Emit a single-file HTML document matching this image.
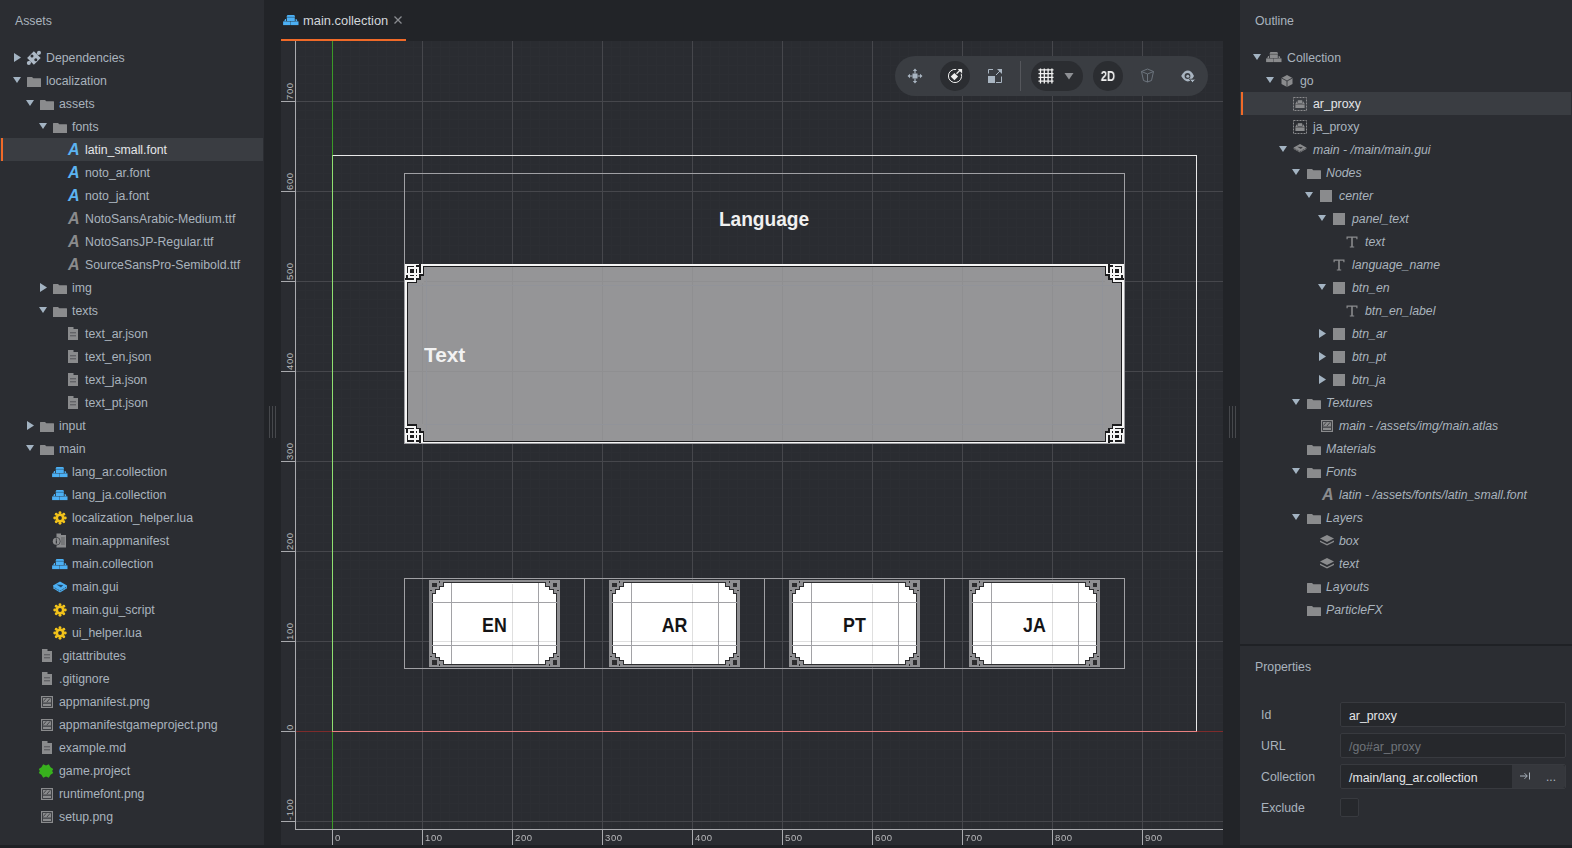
<!DOCTYPE html><html><head><meta charset="utf-8"><style>
html,body{margin:0;padding:0;}
body{width:1572px;height:848px;position:relative;overflow:hidden;background:#1f2125;font-family:'Liberation Sans', sans-serif;}
.a{position:absolute;}

</style></head><body>

<svg width="0" height="0" style="position:absolute">
<defs>
<symbol id="tdown" viewBox="0 0 8 6"><path d="M0 0H8L4 6Z" fill="#a3b3c2"/></symbol>
<symbol id="tright" viewBox="0 0 7 9"><path d="M0 0L7 4.5L0 9Z" fill="#a3b3c2"/></symbol>
<symbol id="folder" viewBox="0 0 14 10"><path d="M0 0.5Q0 0 0.5 0H5L6.3 1.3H13.5Q14 1.3 14 1.8V10H0Z" fill="#8a8b8d"/></symbol>
<symbol id="puzzle" viewBox="0 0 18 18"><g fill="#adb9c6"><path d="M8.9 2.2L15.7 9 8.9 15.8 2.1 9Z"/><circle cx="14" cy="3.8" r="2"/><circle cx="3.8" cy="14" r="2"/><path d="M11.5 4.6L13 3.2 14.6 4.8 13.2 6.3Z"/><path d="M4.6 11.5L3.2 13 4.8 14.6 6.3 13.2Z"/></g><circle cx="7" cy="7" r="1.5" fill="#2b2d32"/><circle cx="10.8" cy="10.8" r="1.5" fill="#2b2d32"/></symbol>
<symbol id="coll" viewBox="0 0 16 11"><g fill="currentColor"><path d="M3.8 1.2Q3.8 0 5 0H10.6Q11.8 0 11.8 1.2V6.1H3.8Z"/><path d="M1.2 6.3L2.1 4H3V6.3Z"/><path d="M14.4 6.3L13.5 4H12.6V6.3Z"/><rect x="0.1" y="6.4" width="7.4" height="3.7"/><rect x="8" y="6.4" width="7.5" height="3.7"/></g><rect x="3.8" y="1.7" width="8" height="1.3" fill="#000" opacity=".25"/><rect x="7.5" y="6.4" width="0.5" height="3.7" fill="currentColor" opacity=".6"/></symbol>
<symbol id="gear" viewBox="0 0 14 14"><g fill="#f1c21b"><circle cx="7" cy="7" r="4.6"/><circle cx="12.30" cy="7.00" r="1.45"/><circle cx="10.75" cy="10.75" r="1.45"/><circle cx="7.00" cy="12.30" r="1.45"/><circle cx="3.25" cy="10.75" r="1.45"/><circle cx="1.70" cy="7.00" r="1.45"/><circle cx="3.25" cy="3.25" r="1.45"/><circle cx="7.00" cy="1.70" r="1.45"/><circle cx="10.75" cy="3.25" r="1.45"/></g><circle cx="7" cy="7" r="1.9" fill="#2b2d32"/></symbol>
<symbol id="manifest" viewBox="0 0 15 15"><path d="M4.5 0.5H9V2H14V14.5H4.5Z" fill="#8a8b8d"/><path d="M9 5H12.8M9 7H12.8M9 9H12.8M9 11H12.8" stroke="#5a5b5f" stroke-width=".9"/><circle cx="4.3" cy="8.3" r="4.1" fill="#2b2d32"/><circle cx="4.3" cy="8.3" r="3.5" fill="#8a8b8d"/><rect x="3.8" y="7.3" width="1.1" height="3.2" fill="#2b2d32"/><rect x="3.8" y="5.6" width="1.1" height="1.1" fill="#2b2d32"/></symbol>
<symbol id="gui" viewBox="0 0 16 12"><path d="M8 0.5L15 4.5V7.2L8 11.5L1 7.2V4.5Z" fill="#4cb0f4"/><path d="M1 5.8L8 10L15 5.8" stroke="#2b2d32" stroke-width=".7" fill="none" stroke-dasharray="1.2 .8"/><path d="M4.5 3.6L11.2 3.9 9 6.4Z" fill="#24486a"/></symbol>
<symbol id="doc" viewBox="0 0 10 13"><path d="M0 0H5.5V2H10V13H0Z" fill="#8a8b8d"/><rect x="2" y="5" width="6" height="1.4" fill="#626367"/><rect x="2" y="8" width="6" height="1.4" fill="#626367"/></symbol>
<symbol id="img" viewBox="0 0 12 12"><rect x=".6" y=".6" width="10.8" height="10.8" fill="none" stroke="#8a8b8d" stroke-width="1.2"/><rect x="2" y="2" width="8" height="4.6" fill="#8a8b8d"/><path d="M2.3 5.6L5.2 2.3M5.8 6.2L9.2 2.3" stroke="#3a3b3e" stroke-width=".9"/><rect x="2" y="7.6" width="8" height="2.4" fill="#8a8b8d"/></symbol>
<symbol id="gproj" viewBox="0 0 16 16"><path d="M5.2 1.2L8 2.6 10.8 1.2 12.6 4.2 15.2 6 14.2 8 15.2 10 12.6 11.8 10.8 14.8 8 13.4 5.2 14.8 3.4 11.8 0.8 10 1.8 8 0.8 6 3.4 4.2Z" fill="#38b11d"/></symbol>
<symbol id="cube" viewBox="0 0 12 12"><path d="M6 0L11.5 3V9L6 12 .5 9V3Z" fill="#8a8b8d"/><path d="M.5 3L6 6 11.5 3M6 6V12" stroke="#2b2d32" stroke-width=".8" fill="none"/></symbol>
<symbol id="proxy" viewBox="0 0 14 14"><rect x=".5" y=".5" width="13" height="13" fill="none" stroke="#8a8b8d" stroke-width="1" stroke-dasharray="2 1"/><path d="M4.8 3.2H9.2V6H4.8Z" fill="#8a8b8d"/><path d="M3.6 4.6H4.4V6.6H9.6V4.6H10.4L11.6 6.8V11H2.4V6.8Z" fill="#8a8b8d"/><rect x="2.4" y="7.2" width="9.2" height=".8" fill="#000" opacity=".3"/></symbol>
<symbol id="box" viewBox="0 0 12 12"><rect width="12" height="12" fill="#8a8b8d"/></symbol>
<symbol id="ticon" viewBox="0 0 12 12"><path d="M0.5 0.5H11.5V3.2H10.3V1.8H6.8V10.5H8.2V11.5H3.8V10.5H5.2V1.8H1.7V3.2H0.5Z" fill="#8a8b8d"/></symbol>
<symbol id="layers" viewBox="0 0 14 11"><path d="M7 0L14 3.5 7 7 0 3.5Z" fill="#8a8b8d"/><path d="M0 5.5L7 9 14 5.5V7L7 10.5 0 7Z" fill="#8a8b8d"/></symbol>
<symbol id="layersg" viewBox="0 0 14 11"><path d="M7 0L14 3.8V5.6L7 9.4 0 5.6V3.8Z" fill="#8a8b8d"/><path d="M0 4.6L7 8.4 14 4.6" stroke="#2b2d32" stroke-width=".8" fill="none" stroke-dasharray="1.2 .8"/><path d="M4 3L10 3.3 8 5.4Z" fill="#3c3d40"/></symbol>
</defs></svg>

<div class="a" style="left:0;top:0;width:264px;height:845px;background:#2b2d32;overflow:hidden;">
<div class="a" style="left:15px;top:12px;font:12.3px/18px 'Liberation Sans', sans-serif;color:#a9b3bd;">Assets</div>
<svg style="position:absolute;left:14px;top:53px;width:7px;height:9px;"><use href="#tright"/></svg>
<svg style="position:absolute;left:25px;top:49px;width:18px;height:18px;"><use href="#puzzle"/></svg>
<div style="position:absolute;left:46px;top:47px;height:23px;font:12.3px/23px 'Liberation Sans', sans-serif;color:#a9b3bd;white-space:nowrap;">Dependencies</div>
<svg style="position:absolute;left:13px;top:77px;width:8px;height:6px;"><use href="#tdown"/></svg>
<svg style="position:absolute;left:27px;top:77px;width:14px;height:10px;"><use href="#folder"/></svg>
<div style="position:absolute;left:46px;top:70px;height:23px;font:12.3px/23px 'Liberation Sans', sans-serif;color:#a9b3bd;white-space:nowrap;">localization</div>
<svg style="position:absolute;left:26px;top:100px;width:8px;height:6px;"><use href="#tdown"/></svg>
<svg style="position:absolute;left:40px;top:100px;width:14px;height:10px;"><use href="#folder"/></svg>
<div style="position:absolute;left:59px;top:93px;height:23px;font:12.3px/23px 'Liberation Sans', sans-serif;color:#a9b3bd;white-space:nowrap;">assets</div>
<svg style="position:absolute;left:39px;top:123px;width:8px;height:6px;"><use href="#tdown"/></svg>
<svg style="position:absolute;left:53px;top:123px;width:14px;height:10px;"><use href="#folder"/></svg>
<div style="position:absolute;left:72px;top:116px;height:23px;font:12.3px/23px 'Liberation Sans', sans-serif;color:#a9b3bd;white-space:nowrap;">fonts</div>
<div style="position:absolute;left:0;top:138px;right:1px;height:23px;background:#3a3d42;"></div>
<div style="position:absolute;left:1px;top:138px;width:2px;height:23px;background:#f06a28;"></div>
<div style="position:absolute;left:68px;top:142px;font:italic bold 16px/16px 'Liberation Sans', sans-serif;color:#5cb4f2;">A</div>
<div style="position:absolute;left:85px;top:139px;height:23px;font:12.3px/23px 'Liberation Sans', sans-serif;color:#e4e6e8;white-space:nowrap;">latin_small.font</div>
<div style="position:absolute;left:68px;top:165px;font:italic bold 16px/16px 'Liberation Sans', sans-serif;color:#5cb4f2;">A</div>
<div style="position:absolute;left:85px;top:162px;height:23px;font:12.3px/23px 'Liberation Sans', sans-serif;color:#a9b3bd;white-space:nowrap;">noto_ar.font</div>
<div style="position:absolute;left:68px;top:188px;font:italic bold 16px/16px 'Liberation Sans', sans-serif;color:#5cb4f2;">A</div>
<div style="position:absolute;left:85px;top:185px;height:23px;font:12.3px/23px 'Liberation Sans', sans-serif;color:#a9b3bd;white-space:nowrap;">noto_ja.font</div>
<div style="position:absolute;left:68px;top:211px;font:italic bold 16px/16px 'Liberation Sans', sans-serif;color:#8a8b8d;">A</div>
<div style="position:absolute;left:85px;top:208px;height:23px;font:12.3px/23px 'Liberation Sans', sans-serif;color:#a9b3bd;white-space:nowrap;">NotoSansArabic-Medium.ttf</div>
<div style="position:absolute;left:68px;top:234px;font:italic bold 16px/16px 'Liberation Sans', sans-serif;color:#8a8b8d;">A</div>
<div style="position:absolute;left:85px;top:231px;height:23px;font:12.3px/23px 'Liberation Sans', sans-serif;color:#a9b3bd;white-space:nowrap;">NotoSansJP-Regular.ttf</div>
<div style="position:absolute;left:68px;top:257px;font:italic bold 16px/16px 'Liberation Sans', sans-serif;color:#8a8b8d;">A</div>
<div style="position:absolute;left:85px;top:254px;height:23px;font:12.3px/23px 'Liberation Sans', sans-serif;color:#a9b3bd;white-space:nowrap;">SourceSansPro-Semibold.ttf</div>
<svg style="position:absolute;left:40px;top:283px;width:7px;height:9px;"><use href="#tright"/></svg>
<svg style="position:absolute;left:53px;top:284px;width:14px;height:10px;"><use href="#folder"/></svg>
<div style="position:absolute;left:72px;top:277px;height:23px;font:12.3px/23px 'Liberation Sans', sans-serif;color:#a9b3bd;white-space:nowrap;">img</div>
<svg style="position:absolute;left:39px;top:307px;width:8px;height:6px;"><use href="#tdown"/></svg>
<svg style="position:absolute;left:53px;top:307px;width:14px;height:10px;"><use href="#folder"/></svg>
<div style="position:absolute;left:72px;top:300px;height:23px;font:12.3px/23px 'Liberation Sans', sans-serif;color:#a9b3bd;white-space:nowrap;">texts</div>
<svg style="position:absolute;left:68px;top:327px;width:10px;height:13px;"><use href="#doc"/></svg>
<div style="position:absolute;left:85px;top:323px;height:23px;font:12.3px/23px 'Liberation Sans', sans-serif;color:#a9b3bd;white-space:nowrap;">text_ar.json</div>
<svg style="position:absolute;left:68px;top:350px;width:10px;height:13px;"><use href="#doc"/></svg>
<div style="position:absolute;left:85px;top:346px;height:23px;font:12.3px/23px 'Liberation Sans', sans-serif;color:#a9b3bd;white-space:nowrap;">text_en.json</div>
<svg style="position:absolute;left:68px;top:373px;width:10px;height:13px;"><use href="#doc"/></svg>
<div style="position:absolute;left:85px;top:369px;height:23px;font:12.3px/23px 'Liberation Sans', sans-serif;color:#a9b3bd;white-space:nowrap;">text_ja.json</div>
<svg style="position:absolute;left:68px;top:396px;width:10px;height:13px;"><use href="#doc"/></svg>
<div style="position:absolute;left:85px;top:392px;height:23px;font:12.3px/23px 'Liberation Sans', sans-serif;color:#a9b3bd;white-space:nowrap;">text_pt.json</div>
<svg style="position:absolute;left:27px;top:421px;width:7px;height:9px;"><use href="#tright"/></svg>
<svg style="position:absolute;left:40px;top:422px;width:14px;height:10px;"><use href="#folder"/></svg>
<div style="position:absolute;left:59px;top:415px;height:23px;font:12.3px/23px 'Liberation Sans', sans-serif;color:#a9b3bd;white-space:nowrap;">input</div>
<svg style="position:absolute;left:26px;top:445px;width:8px;height:6px;"><use href="#tdown"/></svg>
<svg style="position:absolute;left:40px;top:445px;width:14px;height:10px;"><use href="#folder"/></svg>
<div style="position:absolute;left:59px;top:438px;height:23px;font:12.3px/23px 'Liberation Sans', sans-serif;color:#a9b3bd;white-space:nowrap;">main</div>
<svg style="position:absolute;left:52px;top:467px;width:16px;height:11px;color:#4cb0f4;"><use href="#coll"/></svg>
<div style="position:absolute;left:72px;top:461px;height:23px;font:12.3px/23px 'Liberation Sans', sans-serif;color:#a9b3bd;white-space:nowrap;">lang_ar.collection</div>
<svg style="position:absolute;left:52px;top:490px;width:16px;height:11px;color:#4cb0f4;"><use href="#coll"/></svg>
<div style="position:absolute;left:72px;top:484px;height:23px;font:12.3px/23px 'Liberation Sans', sans-serif;color:#a9b3bd;white-space:nowrap;">lang_ja.collection</div>
<svg style="position:absolute;left:53px;top:511px;width:14px;height:14px;"><use href="#gear"/></svg>
<div style="position:absolute;left:72px;top:507px;height:23px;font:12.3px/23px 'Liberation Sans', sans-serif;color:#a9b3bd;white-space:nowrap;">localization_helper.lua</div>
<svg style="position:absolute;left:52px;top:533px;width:15px;height:15px;"><use href="#manifest"/></svg>
<div style="position:absolute;left:72px;top:530px;height:23px;font:12.3px/23px 'Liberation Sans', sans-serif;color:#a9b3bd;white-space:nowrap;">main.appmanifest</div>
<svg style="position:absolute;left:52px;top:559px;width:16px;height:11px;color:#4cb0f4;"><use href="#coll"/></svg>
<div style="position:absolute;left:72px;top:553px;height:23px;font:12.3px/23px 'Liberation Sans', sans-serif;color:#a9b3bd;white-space:nowrap;">main.collection</div>
<svg style="position:absolute;left:52px;top:581px;width:16px;height:12px;"><use href="#gui"/></svg>
<div style="position:absolute;left:72px;top:576px;height:23px;font:12.3px/23px 'Liberation Sans', sans-serif;color:#a9b3bd;white-space:nowrap;">main.gui</div>
<svg style="position:absolute;left:53px;top:603px;width:14px;height:14px;"><use href="#gear"/></svg>
<div style="position:absolute;left:72px;top:599px;height:23px;font:12.3px/23px 'Liberation Sans', sans-serif;color:#a9b3bd;white-space:nowrap;">main.gui_script</div>
<svg style="position:absolute;left:53px;top:626px;width:14px;height:14px;"><use href="#gear"/></svg>
<div style="position:absolute;left:72px;top:622px;height:23px;font:12.3px/23px 'Liberation Sans', sans-serif;color:#a9b3bd;white-space:nowrap;">ui_helper.lua</div>
<svg style="position:absolute;left:42px;top:649px;width:10px;height:13px;"><use href="#doc"/></svg>
<div style="position:absolute;left:59px;top:645px;height:23px;font:12.3px/23px 'Liberation Sans', sans-serif;color:#a9b3bd;white-space:nowrap;">.gitattributes</div>
<svg style="position:absolute;left:42px;top:672px;width:10px;height:13px;"><use href="#doc"/></svg>
<div style="position:absolute;left:59px;top:668px;height:23px;font:12.3px/23px 'Liberation Sans', sans-serif;color:#a9b3bd;white-space:nowrap;">.gitignore</div>
<svg style="position:absolute;left:41px;top:696px;width:12px;height:12px;"><use href="#img"/></svg>
<div style="position:absolute;left:59px;top:691px;height:23px;font:12.3px/23px 'Liberation Sans', sans-serif;color:#a9b3bd;white-space:nowrap;">appmanifest.png</div>
<svg style="position:absolute;left:41px;top:719px;width:12px;height:12px;"><use href="#img"/></svg>
<div style="position:absolute;left:59px;top:714px;height:23px;font:12.3px/23px 'Liberation Sans', sans-serif;color:#a9b3bd;white-space:nowrap;">appmanifestgameproject.png</div>
<svg style="position:absolute;left:42px;top:741px;width:10px;height:13px;"><use href="#doc"/></svg>
<div style="position:absolute;left:59px;top:737px;height:23px;font:12.3px/23px 'Liberation Sans', sans-serif;color:#a9b3bd;white-space:nowrap;">example.md</div>
<svg style="position:absolute;left:38px;top:763px;width:16px;height:16px;"><use href="#gproj"/></svg>
<div style="position:absolute;left:59px;top:760px;height:23px;font:12.3px/23px 'Liberation Sans', sans-serif;color:#a9b3bd;white-space:nowrap;">game.project</div>
<svg style="position:absolute;left:41px;top:788px;width:12px;height:12px;"><use href="#img"/></svg>
<div style="position:absolute;left:59px;top:783px;height:23px;font:12.3px/23px 'Liberation Sans', sans-serif;color:#a9b3bd;white-space:nowrap;">runtimefont.png</div>
<svg style="position:absolute;left:41px;top:811px;width:12px;height:12px;"><use href="#img"/></svg>
<div style="position:absolute;left:59px;top:806px;height:23px;font:12.3px/23px 'Liberation Sans', sans-serif;color:#a9b3bd;white-space:nowrap;">setup.png</div>
</div>
<div class="a" style="left:264px;top:0;width:976px;height:845px;background:#222428;"></div>
<div class="a" style="left:269px;top:406px;width:1px;height:32px;background:#46484c;"></div>
<div class="a" style="left:272px;top:406px;width:1px;height:32px;background:#46484c;"></div>
<div class="a" style="left:275px;top:406px;width:1px;height:32px;background:#46484c;"></div>
<div class="a" style="left:1229px;top:406px;width:1px;height:32px;background:#46484c;"></div>
<div class="a" style="left:1232px;top:406px;width:1px;height:32px;background:#46484c;"></div>
<div class="a" style="left:1235px;top:406px;width:1px;height:32px;background:#46484c;"></div>
<svg style="position:absolute;left:283px;top:15px;width:16px;height:11px;color:#4cb0f4;"><use href="#coll"/></svg>
<div class="a" style="left:303px;top:11.5px;font:12.9px/18px 'Liberation Sans', sans-serif;color:#d2d6da;">main.collection</div>
<svg class="a" style="left:394px;top:16px;" width="8" height="8"><path d="M0.5 0.5L7.5 7.5M7.5 0.5L0.5 7.5" stroke="#8a8c90" stroke-width="1.3"/></svg>
<div class="a" style="left:281px;top:39px;width:125px;height:2px;background:#f06a28;"></div>
<div class="a" style="left:1240px;top:0;width:332px;height:644px;background:#2b2d32;overflow:hidden;">
<div class="a" style="left:15px;top:12px;font:12.3px/18px 'Liberation Sans', sans-serif;color:#a9b3bd;">Outline</div>
<svg style="position:absolute;left:13px;top:54px;width:8px;height:6px;"><use href="#tdown"/></svg>
<svg style="position:absolute;left:26px;top:52px;width:16px;height:11px;color:#8a8b8d;"><use href="#coll"/></svg>
<div style="position:absolute;left:47px;top:47px;height:23px;font:12.3px/23px 'Liberation Sans', sans-serif;color:#a9b3bd;white-space:nowrap;">Collection</div>
<svg style="position:absolute;left:26px;top:77px;width:8px;height:6px;"><use href="#tdown"/></svg>
<svg style="position:absolute;left:41px;top:75px;width:12px;height:12px;"><use href="#cube"/></svg>
<div style="position:absolute;left:60px;top:70px;height:23px;font:12.3px/23px 'Liberation Sans', sans-serif;color:#a9b3bd;white-space:nowrap;">go</div>
<div style="position:absolute;left:0;top:92px;right:1px;height:23px;background:#3a3d42;"></div>
<div style="position:absolute;left:1px;top:92px;width:2px;height:23px;background:#f06a28;"></div>
<svg style="position:absolute;left:53px;top:97px;width:14px;height:14px;"><use href="#proxy"/></svg>
<div style="position:absolute;left:73px;top:93px;height:23px;font:12.3px/23px 'Liberation Sans', sans-serif;color:#e4e6e8;white-space:nowrap;">ar_proxy</div>
<svg style="position:absolute;left:53px;top:120px;width:14px;height:14px;"><use href="#proxy"/></svg>
<div style="position:absolute;left:73px;top:116px;height:23px;font:12.3px/23px 'Liberation Sans', sans-serif;color:#a9b3bd;white-space:nowrap;">ja_proxy</div>
<svg style="position:absolute;left:39px;top:146px;width:8px;height:6px;"><use href="#tdown"/></svg>
<svg style="position:absolute;left:53px;top:144px;width:14px;height:10px;"><use href="#layersg"/></svg>
<div style="position:absolute;left:73px;top:139px;height:23px;font:italic 12.3px/23px 'Liberation Sans', sans-serif;color:#a9b3bd;white-space:nowrap;">main - /main/main.gui</div>
<svg style="position:absolute;left:52px;top:169px;width:8px;height:6px;"><use href="#tdown"/></svg>
<svg style="position:absolute;left:67px;top:169px;width:14px;height:10px;"><use href="#folder"/></svg>
<div style="position:absolute;left:86px;top:162px;height:23px;font:italic 12.3px/23px 'Liberation Sans', sans-serif;color:#a9b3bd;white-space:nowrap;">Nodes</div>
<svg style="position:absolute;left:65px;top:192px;width:8px;height:6px;"><use href="#tdown"/></svg>
<svg style="position:absolute;left:80px;top:190px;width:12px;height:12px;"><use href="#box"/></svg>
<div style="position:absolute;left:99px;top:185px;height:23px;font:italic 12.3px/23px 'Liberation Sans', sans-serif;color:#a9b3bd;white-space:nowrap;">center</div>
<svg style="position:absolute;left:78px;top:215px;width:8px;height:6px;"><use href="#tdown"/></svg>
<svg style="position:absolute;left:93px;top:213px;width:12px;height:12px;"><use href="#box"/></svg>
<div style="position:absolute;left:112px;top:208px;height:23px;font:italic 12.3px/23px 'Liberation Sans', sans-serif;color:#a9b3bd;white-space:nowrap;">panel_text</div>
<svg style="position:absolute;left:106px;top:236px;width:12px;height:12px;"><use href="#ticon"/></svg>
<div style="position:absolute;left:125px;top:231px;height:23px;font:italic 12.3px/23px 'Liberation Sans', sans-serif;color:#a9b3bd;white-space:nowrap;">text</div>
<svg style="position:absolute;left:93px;top:259px;width:12px;height:12px;"><use href="#ticon"/></svg>
<div style="position:absolute;left:112px;top:254px;height:23px;font:italic 12.3px/23px 'Liberation Sans', sans-serif;color:#a9b3bd;white-space:nowrap;">language_name</div>
<svg style="position:absolute;left:78px;top:284px;width:8px;height:6px;"><use href="#tdown"/></svg>
<svg style="position:absolute;left:93px;top:282px;width:12px;height:12px;"><use href="#box"/></svg>
<div style="position:absolute;left:112px;top:277px;height:23px;font:italic 12.3px/23px 'Liberation Sans', sans-serif;color:#a9b3bd;white-space:nowrap;">btn_en</div>
<svg style="position:absolute;left:106px;top:305px;width:12px;height:12px;"><use href="#ticon"/></svg>
<div style="position:absolute;left:125px;top:300px;height:23px;font:italic 12.3px/23px 'Liberation Sans', sans-serif;color:#a9b3bd;white-space:nowrap;">btn_en_label</div>
<svg style="position:absolute;left:79px;top:329px;width:7px;height:9px;"><use href="#tright"/></svg>
<svg style="position:absolute;left:93px;top:328px;width:12px;height:12px;"><use href="#box"/></svg>
<div style="position:absolute;left:112px;top:323px;height:23px;font:italic 12.3px/23px 'Liberation Sans', sans-serif;color:#a9b3bd;white-space:nowrap;">btn_ar</div>
<svg style="position:absolute;left:79px;top:352px;width:7px;height:9px;"><use href="#tright"/></svg>
<svg style="position:absolute;left:93px;top:351px;width:12px;height:12px;"><use href="#box"/></svg>
<div style="position:absolute;left:112px;top:346px;height:23px;font:italic 12.3px/23px 'Liberation Sans', sans-serif;color:#a9b3bd;white-space:nowrap;">btn_pt</div>
<svg style="position:absolute;left:79px;top:375px;width:7px;height:9px;"><use href="#tright"/></svg>
<svg style="position:absolute;left:93px;top:374px;width:12px;height:12px;"><use href="#box"/></svg>
<div style="position:absolute;left:112px;top:369px;height:23px;font:italic 12.3px/23px 'Liberation Sans', sans-serif;color:#a9b3bd;white-space:nowrap;">btn_ja</div>
<svg style="position:absolute;left:52px;top:399px;width:8px;height:6px;"><use href="#tdown"/></svg>
<svg style="position:absolute;left:67px;top:399px;width:14px;height:10px;"><use href="#folder"/></svg>
<div style="position:absolute;left:86px;top:392px;height:23px;font:italic 12.3px/23px 'Liberation Sans', sans-serif;color:#a9b3bd;white-space:nowrap;">Textures</div>
<svg style="position:absolute;left:81px;top:420px;width:12px;height:12px;"><use href="#img"/></svg>
<div style="position:absolute;left:99px;top:415px;height:23px;font:italic 12.3px/23px 'Liberation Sans', sans-serif;color:#a9b3bd;white-space:nowrap;">main - /assets/img/main.atlas</div>
<svg style="position:absolute;left:67px;top:445px;width:14px;height:10px;"><use href="#folder"/></svg>
<div style="position:absolute;left:86px;top:438px;height:23px;font:italic 12.3px/23px 'Liberation Sans', sans-serif;color:#a9b3bd;white-space:nowrap;">Materials</div>
<svg style="position:absolute;left:52px;top:468px;width:8px;height:6px;"><use href="#tdown"/></svg>
<svg style="position:absolute;left:67px;top:468px;width:14px;height:10px;"><use href="#folder"/></svg>
<div style="position:absolute;left:86px;top:461px;height:23px;font:italic 12.3px/23px 'Liberation Sans', sans-serif;color:#a9b3bd;white-space:nowrap;">Fonts</div>
<div style="position:absolute;left:82px;top:487px;font:italic bold 16px/16px 'Liberation Sans', sans-serif;color:#8a8b8d;">A</div>
<div style="position:absolute;left:99px;top:484px;height:23px;font:italic 12.3px/23px 'Liberation Sans', sans-serif;color:#a9b3bd;white-space:nowrap;">latin - /assets/fonts/latin_small.font</div>
<svg style="position:absolute;left:52px;top:514px;width:8px;height:6px;"><use href="#tdown"/></svg>
<svg style="position:absolute;left:67px;top:514px;width:14px;height:10px;"><use href="#folder"/></svg>
<div style="position:absolute;left:86px;top:507px;height:23px;font:italic 12.3px/23px 'Liberation Sans', sans-serif;color:#a9b3bd;white-space:nowrap;">Layers</div>
<svg style="position:absolute;left:80px;top:535px;width:14px;height:11px;"><use href="#layers"/></svg>
<div style="position:absolute;left:99px;top:530px;height:23px;font:italic 12.3px/23px 'Liberation Sans', sans-serif;color:#a9b3bd;white-space:nowrap;">box</div>
<svg style="position:absolute;left:80px;top:558px;width:14px;height:11px;"><use href="#layers"/></svg>
<div style="position:absolute;left:99px;top:553px;height:23px;font:italic 12.3px/23px 'Liberation Sans', sans-serif;color:#a9b3bd;white-space:nowrap;">text</div>
<svg style="position:absolute;left:67px;top:583px;width:14px;height:10px;"><use href="#folder"/></svg>
<div style="position:absolute;left:86px;top:576px;height:23px;font:italic 12.3px/23px 'Liberation Sans', sans-serif;color:#a9b3bd;white-space:nowrap;">Layouts</div>
<svg style="position:absolute;left:67px;top:606px;width:14px;height:10px;"><use href="#folder"/></svg>
<div style="position:absolute;left:86px;top:599px;height:23px;font:italic 12.3px/23px 'Liberation Sans', sans-serif;color:#a9b3bd;white-space:nowrap;">ParticleFX</div>
</div>
<div class="a" style="left:1240px;top:646px;width:332px;height:199px;background:#2b2d32;"></div>
<div class="a" style="left:1255px;top:658px;font:12.3px/18px 'Liberation Sans', sans-serif;color:#a9b3bd;">Properties</div>
<div class="a" style="left:1261px;top:703px;font:12.3px/25px 'Liberation Sans', sans-serif;color:#a9b3bd;">Id</div>
<div class="a" style="left:1261px;top:734px;font:12.3px/25px 'Liberation Sans', sans-serif;color:#a9b3bd;">URL</div>
<div class="a" style="left:1261px;top:765px;font:12.3px/25px 'Liberation Sans', sans-serif;color:#a9b3bd;">Collection</div>
<div class="a" style="left:1261px;top:796px;font:12.3px/25px 'Liberation Sans', sans-serif;color:#a9b3bd;">Exclude</div>
<div class="a" style="left:1340px;top:702px;width:224px;height:23px;background:#26282c;border:1px solid #383a3f;border-radius:2px;"></div>
<div class="a" style="left:1340px;top:733px;width:224px;height:23px;background:#26282c;border:1px solid #383a3f;border-radius:2px;"></div>
<div class="a" style="left:1340px;top:764px;width:224px;height:23px;background:#26282c;border:1px solid #383a3f;border-radius:2px;"></div>
<div class="a" style="left:1349px;top:704px;font:12.3px/25px 'Liberation Sans', sans-serif;color:#e4e6e8;">ar_proxy</div>
<div class="a" style="left:1349px;top:735px;font:12.3px/25px 'Liberation Sans', sans-serif;color:#6f747a;">/go#ar_proxy</div>
<div class="a" style="left:1512px;top:765px;width:53px;height:23px;background:#35373c;border-radius:0 2px 2px 0;"></div>
<div class="a" style="left:1349px;top:766px;font:12.3px/25px 'Liberation Sans', sans-serif;color:#e4e6e8;">/main/lang_ar.collection</div>
<svg class="a" style="left:1519px;top:771px;" width="12" height="10"><path d="M1 5H8M5.5 2.2L8.3 5 5.5 7.8M10.5 1.5V8.5" stroke="#a9b3bd" stroke-width="1" fill="none"/></svg>
<div class="a" style="left:1546px;top:766px;font:12px/23px 'Liberation Sans', sans-serif;color:#a9b3bd;">...</div>
<div class="a" style="left:1340px;top:798px;width:17px;height:17px;background:#26282c;border:1px solid #383a3f;border-radius:2px;"></div>
<svg class="a" style="left:281px;top:41px;" width="942" height="804" shape-rendering="crispEdges"><rect x="0" y="0" width="942" height="804" fill="#2a2c31"/>
<clipPath id="clipFine"><rect x="15" y="0" width="942" height="788"/></clipPath>
<path d="M6.5 0V804 M15.5 0V804 M24.5 0V804 M33.5 0V804 M42.5 0V804 M60.5 0V804 M69.5 0V804 M78.5 0V804 M87.5 0V804 M96.5 0V804 M105.5 0V804 M114.5 0V804 M123.5 0V804 M132.5 0V804 M150.5 0V804 M159.5 0V804 M168.5 0V804 M177.5 0V804 M186.5 0V804 M195.5 0V804 M204.5 0V804 M213.5 0V804 M222.5 0V804 M240.5 0V804 M249.5 0V804 M258.5 0V804 M267.5 0V804 M276.5 0V804 M285.5 0V804 M294.5 0V804 M303.5 0V804 M312.5 0V804 M330.5 0V804 M339.5 0V804 M348.5 0V804 M357.5 0V804 M366.5 0V804 M375.5 0V804 M384.5 0V804 M393.5 0V804 M402.5 0V804 M420.5 0V804 M429.5 0V804 M438.5 0V804 M447.5 0V804 M456.5 0V804 M465.5 0V804 M474.5 0V804 M483.5 0V804 M492.5 0V804 M510.5 0V804 M519.5 0V804 M528.5 0V804 M537.5 0V804 M546.5 0V804 M555.5 0V804 M564.5 0V804 M573.5 0V804 M582.5 0V804 M600.5 0V804 M609.5 0V804 M618.5 0V804 M627.5 0V804 M636.5 0V804 M645.5 0V804 M654.5 0V804 M663.5 0V804 M672.5 0V804 M690.5 0V804 M699.5 0V804 M708.5 0V804 M717.5 0V804 M726.5 0V804 M735.5 0V804 M744.5 0V804 M753.5 0V804 M762.5 0V804 M780.5 0V804 M789.5 0V804 M798.5 0V804 M807.5 0V804 M816.5 0V804 M825.5 0V804 M834.5 0V804 M843.5 0V804 M852.5 0V804 M870.5 0V804 M879.5 0V804 M888.5 0V804 M897.5 0V804 M906.5 0V804 M915.5 0V804 M924.5 0V804 M933.5 0V804 M942.5 0V804 M0 798.5H942 M0 789.5H942 M0 771.5H942 M0 762.5H942 M0 753.5H942 M0 744.5H942 M0 735.5H942 M0 726.5H942 M0 717.5H942 M0 708.5H942 M0 699.5H942 M0 681.5H942 M0 672.5H942 M0 663.5H942 M0 654.5H942 M0 645.5H942 M0 636.5H942 M0 627.5H942 M0 618.5H942 M0 609.5H942 M0 591.5H942 M0 582.5H942 M0 573.5H942 M0 564.5H942 M0 555.5H942 M0 546.5H942 M0 537.5H942 M0 528.5H942 M0 519.5H942 M0 501.5H942 M0 492.5H942 M0 483.5H942 M0 474.5H942 M0 465.5H942 M0 456.5H942 M0 447.5H942 M0 438.5H942 M0 429.5H942 M0 411.5H942 M0 402.5H942 M0 393.5H942 M0 384.5H942 M0 375.5H942 M0 366.5H942 M0 357.5H942 M0 348.5H942 M0 339.5H942 M0 321.5H942 M0 312.5H942 M0 303.5H942 M0 294.5H942 M0 285.5H942 M0 276.5H942 M0 267.5H942 M0 258.5H942 M0 249.5H942 M0 231.5H942 M0 222.5H942 M0 213.5H942 M0 204.5H942 M0 195.5H942 M0 186.5H942 M0 177.5H942 M0 168.5H942 M0 159.5H942 M0 141.5H942 M0 132.5H942 M0 123.5H942 M0 114.5H942 M0 105.5H942 M0 96.5H942 M0 87.5H942 M0 78.5H942 M0 69.5H942 M0 51.5H942 M0 42.5H942 M0 33.5H942 M0 24.5H942 M0 15.5H942 M0 6.5H942" stroke="#2c2e33" stroke-width="1" fill="none" clip-path="url(#clipFine)"/>
<path d="M51.5 0V804 M141.5 0V804 M231.5 0V804 M321.5 0V804 M411.5 0V804 M501.5 0V804 M591.5 0V804 M681.5 0V804 M771.5 0V804 M861.5 0V804 M0 780.5H942 M0 690.5H942 M0 600.5H942 M0 510.5H942 M0 420.5H942 M0 330.5H942 M0 240.5H942 M0 150.5H942 M0 60.5H942" stroke="#46474c" stroke-width="1" fill="none"/>
<path d="M51.5 0V804" stroke="#3b9a27" stroke-width="1"/>
<path d="M0 690.5H942" stroke="#7e2b2b" stroke-width="1"/>
<path d="M51 114.5H915.5V690" stroke="#e8e8e8" stroke-width="1.5" fill="none"/>
<path d="M51.5 114V690" stroke="#8fe070" stroke-width="1.2"/>
<path d="M51 690.5H916" stroke="#e88080" stroke-width="1.2"/>
<rect x="123.5" y="132.5" width="720" height="270" fill="none" stroke="#a0a0a4" stroke-width="1"/>
<rect x="124" y="223" width="719" height="179.3" fill="#f6f6f6"/>
<rect x="125.8" y="224.8" width="715.4" height="175.70000000000002" fill="#1c1c1e"/>
<rect x="126.8" y="225.8" width="713.4" height="173.70000000000002" fill="#959597"/>
<g opacity="0.035"><path d="M51.5 0V804 M141.5 0V804 M231.5 0V804 M321.5 0V804 M411.5 0V804 M501.5 0V804 M591.5 0V804 M681.5 0V804 M771.5 0V804 M861.5 0V804 M0 780.5H942 M0 690.5H942 M0 600.5H942 M0 510.5H942 M0 420.5H942 M0 330.5H942 M0 240.5H942 M0 150.5H942 M0 60.5H942" stroke="#000000" stroke-width="1" fill="none" clip-path="url(#clipPanel)"/></g>
<path d="M145.5 226V399M821.5 226V399M127 244.5H840M127 383.5H840" stroke="#919399" stroke-width="1" fill="none"/>
<g transform="translate(824 383.0)"><rect x="0" y="0" width="19" height="19.3" fill="#f6f6f6"/><path d="M0 0H7.1V3.5H3.1V7.3H0Z" fill="#959597"/><rect x="7.5" y="0" width="9.5" height="1.65" fill="#1c1c1e"/><rect x="7.1" y="0" width="0.9" height="5" fill="#1c1c1e"/><rect x="3.1" y="3.5" width="4.9" height="1.5" fill="#1c1c1e"/><rect x="3.1" y="3.5" width="1.6" height="5.5" fill="#1c1c1e"/><rect x="0" y="7.3" width="4.7" height="1.7" fill="#1c1c1e"/><rect x="0" y="9" width="0.8" height="8.7" fill="#1c1c1e"/><rect x="10.4" y="3.8" width="8.5" height="1.2" fill="#1c1c1e"/><rect x="16.3" y="3.8" width="1.6" height="4.9" fill="#1c1c1e"/><rect x="6.8" y="7.1" width="1.5" height="1.6" fill="#1c1c1e"/><rect x="10.3" y="7.1" width="3.5" height="1.6" fill="#1c1c1e"/><rect x="6.8" y="10.8" width="1.2" height="3.1" fill="#1c1c1e"/><rect x="10.3" y="10.8" width="3.5" height="3.1" fill="#1c1c1e"/><rect x="3.1" y="10.8" width="1.6" height="8.1" fill="#1c1c1e"/><rect x="3.1" y="16.3" width="4.7" height="2.1" fill="#1c1c1e"/><rect x="10.4" y="16.3" width="6.6" height="1.4" fill="#1c1c1e"/><rect x="16" y="10.8" width="1" height="6.9" fill="#1c1c1e"/></g>
<g transform="translate(143 242.3) scale(-1 -1)"><rect x="0" y="0" width="19" height="19.3" fill="#f6f6f6"/><path d="M0 0H7.1V3.5H3.1V7.3H0Z" fill="#959597"/><rect x="7.5" y="0" width="9.5" height="1.65" fill="#1c1c1e"/><rect x="7.1" y="0" width="0.9" height="5" fill="#1c1c1e"/><rect x="3.1" y="3.5" width="4.9" height="1.5" fill="#1c1c1e"/><rect x="3.1" y="3.5" width="1.6" height="5.5" fill="#1c1c1e"/><rect x="0" y="7.3" width="4.7" height="1.7" fill="#1c1c1e"/><rect x="0" y="9" width="0.8" height="8.7" fill="#1c1c1e"/><rect x="10.4" y="3.8" width="8.5" height="1.2" fill="#1c1c1e"/><rect x="16.3" y="3.8" width="1.6" height="4.9" fill="#1c1c1e"/><rect x="6.8" y="7.1" width="1.5" height="1.6" fill="#1c1c1e"/><rect x="10.3" y="7.1" width="3.5" height="1.6" fill="#1c1c1e"/><rect x="6.8" y="10.8" width="1.2" height="3.1" fill="#1c1c1e"/><rect x="10.3" y="10.8" width="3.5" height="3.1" fill="#1c1c1e"/><rect x="3.1" y="10.8" width="1.6" height="8.1" fill="#1c1c1e"/><rect x="3.1" y="16.3" width="4.7" height="2.1" fill="#1c1c1e"/><rect x="10.4" y="16.3" width="6.6" height="1.4" fill="#1c1c1e"/><rect x="16" y="10.8" width="1" height="6.9" fill="#1c1c1e"/></g>
<g transform="translate(824 242.3) scale(1 -1)"><rect x="0" y="0" width="19" height="19.3" fill="#f6f6f6"/><path d="M0 0H7.1V3.5H3.1V7.3H0Z" fill="#959597"/><rect x="7.5" y="0" width="9.5" height="1.65" fill="#1c1c1e"/><rect x="7.1" y="0" width="0.9" height="5" fill="#1c1c1e"/><rect x="3.1" y="3.5" width="4.9" height="1.5" fill="#1c1c1e"/><rect x="3.1" y="3.5" width="1.6" height="5.5" fill="#1c1c1e"/><rect x="0" y="7.3" width="4.7" height="1.7" fill="#1c1c1e"/><rect x="0" y="9" width="0.8" height="8.7" fill="#1c1c1e"/><rect x="10.4" y="3.8" width="8.5" height="1.2" fill="#1c1c1e"/><rect x="16.3" y="3.8" width="1.6" height="4.9" fill="#1c1c1e"/><rect x="6.8" y="7.1" width="1.5" height="1.6" fill="#1c1c1e"/><rect x="10.3" y="7.1" width="3.5" height="1.6" fill="#1c1c1e"/><rect x="6.8" y="10.8" width="1.2" height="3.1" fill="#1c1c1e"/><rect x="10.3" y="10.8" width="3.5" height="3.1" fill="#1c1c1e"/><rect x="3.1" y="10.8" width="1.6" height="8.1" fill="#1c1c1e"/><rect x="3.1" y="16.3" width="4.7" height="2.1" fill="#1c1c1e"/><rect x="10.4" y="16.3" width="6.6" height="1.4" fill="#1c1c1e"/><rect x="16" y="10.8" width="1" height="6.9" fill="#1c1c1e"/></g>
<g transform="translate(143 383.0) scale(-1 1)"><rect x="0" y="0" width="19" height="19.3" fill="#f6f6f6"/><path d="M0 0H7.1V3.5H3.1V7.3H0Z" fill="#959597"/><rect x="7.5" y="0" width="9.5" height="1.65" fill="#1c1c1e"/><rect x="7.1" y="0" width="0.9" height="5" fill="#1c1c1e"/><rect x="3.1" y="3.5" width="4.9" height="1.5" fill="#1c1c1e"/><rect x="3.1" y="3.5" width="1.6" height="5.5" fill="#1c1c1e"/><rect x="0" y="7.3" width="4.7" height="1.7" fill="#1c1c1e"/><rect x="0" y="9" width="0.8" height="8.7" fill="#1c1c1e"/><rect x="10.4" y="3.8" width="8.5" height="1.2" fill="#1c1c1e"/><rect x="16.3" y="3.8" width="1.6" height="4.9" fill="#1c1c1e"/><rect x="6.8" y="7.1" width="1.5" height="1.6" fill="#1c1c1e"/><rect x="10.3" y="7.1" width="3.5" height="1.6" fill="#1c1c1e"/><rect x="6.8" y="10.8" width="1.2" height="3.1" fill="#1c1c1e"/><rect x="10.3" y="10.8" width="3.5" height="3.1" fill="#1c1c1e"/><rect x="3.1" y="10.8" width="1.6" height="8.1" fill="#1c1c1e"/><rect x="3.1" y="16.3" width="4.7" height="2.1" fill="#1c1c1e"/><rect x="10.4" y="16.3" width="6.6" height="1.4" fill="#1c1c1e"/><rect x="16" y="10.8" width="1" height="6.9" fill="#1c1c1e"/></g>
<clipPath id="clipPanel"><rect x="126" y="226" width="714" height="173"/></clipPath>
<rect x="123.5" y="537.5" width="720" height="90" fill="none" stroke="#a0a0a4" stroke-width="1"/>
<path d="M303.5 537V627" stroke="#a0a0a4" stroke-width="1"/>
<path d="M483.5 537V627" stroke="#a0a0a4" stroke-width="1"/>
<path d="M663.5 537V627" stroke="#a0a0a4" stroke-width="1"/>
<rect x="148" y="539" width="131" height="87" fill="#8e8e91"/><rect x="151" y="541" width="125" height="83" fill="#2e2e30"/><rect x="152" y="542" width="123" height="81" fill="#ffffff"/><g transform="translate(148 539) scale(1 1)"><path d="M0 0H20V2H14V6H10V9H6V13H3V20H0Z" fill="#8e8e91"/><path d="M14 2H20V3H15V7H11V10H7V14H4V20H3V13H6V9H10V6H14Z" fill="#2e2e30"/><path d="M15 3H20V20H4V14H7V10H11V7H15Z" fill="#ffffff"/><rect x="3" y="2.5" width="4.5" height="4.5" fill="#2e2e30"/><rect x="10" y="1" width="1.2" height="2" fill="#2e2e30"/><rect x="1" y="10" width="2" height="1.2" fill="#2e2e30"/></g><g transform="translate(279 539) scale(-1 1)"><path d="M0 0H20V2H14V6H10V9H6V13H3V20H0Z" fill="#8e8e91"/><path d="M14 2H20V3H15V7H11V10H7V14H4V20H3V13H6V9H10V6H14Z" fill="#2e2e30"/><path d="M15 3H20V20H4V14H7V10H11V7H15Z" fill="#ffffff"/><rect x="3" y="2.5" width="4.5" height="4.5" fill="#2e2e30"/><rect x="10" y="1" width="1.2" height="2" fill="#2e2e30"/><rect x="1" y="10" width="2" height="1.2" fill="#2e2e30"/></g><g transform="translate(148 626) scale(1 -1)"><path d="M0 0H20V2H14V6H10V9H6V13H3V20H0Z" fill="#8e8e91"/><path d="M14 2H20V3H15V7H11V10H7V14H4V20H3V13H6V9H10V6H14Z" fill="#2e2e30"/><path d="M15 3H20V20H4V14H7V10H11V7H15Z" fill="#ffffff"/><rect x="3" y="2.5" width="4.5" height="4.5" fill="#2e2e30"/><rect x="10" y="1" width="1.2" height="2" fill="#2e2e30"/><rect x="1" y="10" width="2" height="1.2" fill="#2e2e30"/></g><g transform="translate(279 626) scale(-1 -1)"><path d="M0 0H20V2H14V6H10V9H6V13H3V20H0Z" fill="#8e8e91"/><path d="M14 2H20V3H15V7H11V10H7V14H4V20H3V13H6V9H10V6H14Z" fill="#2e2e30"/><path d="M15 3H20V20H4V14H7V10H11V7H15Z" fill="#ffffff"/><rect x="3" y="2.5" width="4.5" height="4.5" fill="#2e2e30"/><rect x="10" y="1" width="1.2" height="2" fill="#2e2e30"/><rect x="1" y="10" width="2" height="1.2" fill="#2e2e30"/></g>
<path d="M170.5 542V623" stroke="#a2a2a6" stroke-width="1"/>
<path d="M257.5 542V623" stroke="#a2a2a6" stroke-width="1"/>
<path d="M151 561.5H276" stroke="#a2a2a6" stroke-width="1"/>
<path d="M151 604.5H276" stroke="#a2a2a6" stroke-width="1"/>
<rect x="328" y="539" width="131" height="87" fill="#8e8e91"/><rect x="331" y="541" width="125" height="83" fill="#2e2e30"/><rect x="332" y="542" width="123" height="81" fill="#ffffff"/><g transform="translate(328 539) scale(1 1)"><path d="M0 0H20V2H14V6H10V9H6V13H3V20H0Z" fill="#8e8e91"/><path d="M14 2H20V3H15V7H11V10H7V14H4V20H3V13H6V9H10V6H14Z" fill="#2e2e30"/><path d="M15 3H20V20H4V14H7V10H11V7H15Z" fill="#ffffff"/><rect x="3" y="2.5" width="4.5" height="4.5" fill="#2e2e30"/><rect x="10" y="1" width="1.2" height="2" fill="#2e2e30"/><rect x="1" y="10" width="2" height="1.2" fill="#2e2e30"/></g><g transform="translate(459 539) scale(-1 1)"><path d="M0 0H20V2H14V6H10V9H6V13H3V20H0Z" fill="#8e8e91"/><path d="M14 2H20V3H15V7H11V10H7V14H4V20H3V13H6V9H10V6H14Z" fill="#2e2e30"/><path d="M15 3H20V20H4V14H7V10H11V7H15Z" fill="#ffffff"/><rect x="3" y="2.5" width="4.5" height="4.5" fill="#2e2e30"/><rect x="10" y="1" width="1.2" height="2" fill="#2e2e30"/><rect x="1" y="10" width="2" height="1.2" fill="#2e2e30"/></g><g transform="translate(328 626) scale(1 -1)"><path d="M0 0H20V2H14V6H10V9H6V13H3V20H0Z" fill="#8e8e91"/><path d="M14 2H20V3H15V7H11V10H7V14H4V20H3V13H6V9H10V6H14Z" fill="#2e2e30"/><path d="M15 3H20V20H4V14H7V10H11V7H15Z" fill="#ffffff"/><rect x="3" y="2.5" width="4.5" height="4.5" fill="#2e2e30"/><rect x="10" y="1" width="1.2" height="2" fill="#2e2e30"/><rect x="1" y="10" width="2" height="1.2" fill="#2e2e30"/></g><g transform="translate(459 626) scale(-1 -1)"><path d="M0 0H20V2H14V6H10V9H6V13H3V20H0Z" fill="#8e8e91"/><path d="M14 2H20V3H15V7H11V10H7V14H4V20H3V13H6V9H10V6H14Z" fill="#2e2e30"/><path d="M15 3H20V20H4V14H7V10H11V7H15Z" fill="#ffffff"/><rect x="3" y="2.5" width="4.5" height="4.5" fill="#2e2e30"/><rect x="10" y="1" width="1.2" height="2" fill="#2e2e30"/><rect x="1" y="10" width="2" height="1.2" fill="#2e2e30"/></g>
<path d="M350.5 542V623" stroke="#a2a2a6" stroke-width="1"/>
<path d="M437.5 542V623" stroke="#a2a2a6" stroke-width="1"/>
<path d="M331 561.5H456" stroke="#a2a2a6" stroke-width="1"/>
<path d="M331 604.5H456" stroke="#a2a2a6" stroke-width="1"/>
<rect x="508" y="539" width="131" height="87" fill="#8e8e91"/><rect x="511" y="541" width="125" height="83" fill="#2e2e30"/><rect x="512" y="542" width="123" height="81" fill="#ffffff"/><g transform="translate(508 539) scale(1 1)"><path d="M0 0H20V2H14V6H10V9H6V13H3V20H0Z" fill="#8e8e91"/><path d="M14 2H20V3H15V7H11V10H7V14H4V20H3V13H6V9H10V6H14Z" fill="#2e2e30"/><path d="M15 3H20V20H4V14H7V10H11V7H15Z" fill="#ffffff"/><rect x="3" y="2.5" width="4.5" height="4.5" fill="#2e2e30"/><rect x="10" y="1" width="1.2" height="2" fill="#2e2e30"/><rect x="1" y="10" width="2" height="1.2" fill="#2e2e30"/></g><g transform="translate(639 539) scale(-1 1)"><path d="M0 0H20V2H14V6H10V9H6V13H3V20H0Z" fill="#8e8e91"/><path d="M14 2H20V3H15V7H11V10H7V14H4V20H3V13H6V9H10V6H14Z" fill="#2e2e30"/><path d="M15 3H20V20H4V14H7V10H11V7H15Z" fill="#ffffff"/><rect x="3" y="2.5" width="4.5" height="4.5" fill="#2e2e30"/><rect x="10" y="1" width="1.2" height="2" fill="#2e2e30"/><rect x="1" y="10" width="2" height="1.2" fill="#2e2e30"/></g><g transform="translate(508 626) scale(1 -1)"><path d="M0 0H20V2H14V6H10V9H6V13H3V20H0Z" fill="#8e8e91"/><path d="M14 2H20V3H15V7H11V10H7V14H4V20H3V13H6V9H10V6H14Z" fill="#2e2e30"/><path d="M15 3H20V20H4V14H7V10H11V7H15Z" fill="#ffffff"/><rect x="3" y="2.5" width="4.5" height="4.5" fill="#2e2e30"/><rect x="10" y="1" width="1.2" height="2" fill="#2e2e30"/><rect x="1" y="10" width="2" height="1.2" fill="#2e2e30"/></g><g transform="translate(639 626) scale(-1 -1)"><path d="M0 0H20V2H14V6H10V9H6V13H3V20H0Z" fill="#8e8e91"/><path d="M14 2H20V3H15V7H11V10H7V14H4V20H3V13H6V9H10V6H14Z" fill="#2e2e30"/><path d="M15 3H20V20H4V14H7V10H11V7H15Z" fill="#ffffff"/><rect x="3" y="2.5" width="4.5" height="4.5" fill="#2e2e30"/><rect x="10" y="1" width="1.2" height="2" fill="#2e2e30"/><rect x="1" y="10" width="2" height="1.2" fill="#2e2e30"/></g>
<path d="M530.5 542V623" stroke="#a2a2a6" stroke-width="1"/>
<path d="M617.5 542V623" stroke="#a2a2a6" stroke-width="1"/>
<path d="M511 561.5H636" stroke="#a2a2a6" stroke-width="1"/>
<path d="M511 604.5H636" stroke="#a2a2a6" stroke-width="1"/>
<rect x="688" y="539" width="131" height="87" fill="#8e8e91"/><rect x="691" y="541" width="125" height="83" fill="#2e2e30"/><rect x="692" y="542" width="123" height="81" fill="#ffffff"/><g transform="translate(688 539) scale(1 1)"><path d="M0 0H20V2H14V6H10V9H6V13H3V20H0Z" fill="#8e8e91"/><path d="M14 2H20V3H15V7H11V10H7V14H4V20H3V13H6V9H10V6H14Z" fill="#2e2e30"/><path d="M15 3H20V20H4V14H7V10H11V7H15Z" fill="#ffffff"/><rect x="3" y="2.5" width="4.5" height="4.5" fill="#2e2e30"/><rect x="10" y="1" width="1.2" height="2" fill="#2e2e30"/><rect x="1" y="10" width="2" height="1.2" fill="#2e2e30"/></g><g transform="translate(819 539) scale(-1 1)"><path d="M0 0H20V2H14V6H10V9H6V13H3V20H0Z" fill="#8e8e91"/><path d="M14 2H20V3H15V7H11V10H7V14H4V20H3V13H6V9H10V6H14Z" fill="#2e2e30"/><path d="M15 3H20V20H4V14H7V10H11V7H15Z" fill="#ffffff"/><rect x="3" y="2.5" width="4.5" height="4.5" fill="#2e2e30"/><rect x="10" y="1" width="1.2" height="2" fill="#2e2e30"/><rect x="1" y="10" width="2" height="1.2" fill="#2e2e30"/></g><g transform="translate(688 626) scale(1 -1)"><path d="M0 0H20V2H14V6H10V9H6V13H3V20H0Z" fill="#8e8e91"/><path d="M14 2H20V3H15V7H11V10H7V14H4V20H3V13H6V9H10V6H14Z" fill="#2e2e30"/><path d="M15 3H20V20H4V14H7V10H11V7H15Z" fill="#ffffff"/><rect x="3" y="2.5" width="4.5" height="4.5" fill="#2e2e30"/><rect x="10" y="1" width="1.2" height="2" fill="#2e2e30"/><rect x="1" y="10" width="2" height="1.2" fill="#2e2e30"/></g><g transform="translate(819 626) scale(-1 -1)"><path d="M0 0H20V2H14V6H10V9H6V13H3V20H0Z" fill="#8e8e91"/><path d="M14 2H20V3H15V7H11V10H7V14H4V20H3V13H6V9H10V6H14Z" fill="#2e2e30"/><path d="M15 3H20V20H4V14H7V10H11V7H15Z" fill="#ffffff"/><rect x="3" y="2.5" width="4.5" height="4.5" fill="#2e2e30"/><rect x="10" y="1" width="1.2" height="2" fill="#2e2e30"/><rect x="1" y="10" width="2" height="1.2" fill="#2e2e30"/></g>
<path d="M710.5 542V623" stroke="#a2a2a6" stroke-width="1"/>
<path d="M797.5 542V623" stroke="#a2a2a6" stroke-width="1"/>
<path d="M691 561.5H816" stroke="#a2a2a6" stroke-width="1"/>
<path d="M691 604.5H816" stroke="#a2a2a6" stroke-width="1"/>
<clipPath id="clipBtn"><rect x="152" y="543" width="123" height="79"/><rect x="332" y="543" width="123" height="79"/><rect x="512" y="543" width="123" height="79"/><rect x="692" y="543" width="123" height="79"/></clipPath>
<g opacity="0.12"><path d="M51.5 0V804 M141.5 0V804 M231.5 0V804 M321.5 0V804 M411.5 0V804 M501.5 0V804 M591.5 0V804 M681.5 0V804 M771.5 0V804 M861.5 0V804 M0 780.5H942 M0 690.5H942 M0 600.5H942 M0 510.5H942 M0 420.5H942 M0 330.5H942 M0 240.5H942 M0 150.5H942 M0 60.5H942" stroke="#000" stroke-width="1" fill="none" clip-path="url(#clipBtn)"/></g></svg>
<div class="a" style="left:404px;top:205px;width:720px;text-align:center;font:bold 20px/28px 'Liberation Sans', sans-serif;color:#f0f0f0;transform:scaleX(0.955);">Language</div>
<div class="a" style="left:424px;top:341px;font:bold 20px/28px 'Liberation Sans', sans-serif;color:#f2f2f2;transform-origin:0 0;transform:scaleX(1.04);">Text</div>
<div class="a" style="left:429px;top:611px;width:131px;text-align:center;font:bold 20px/28px 'Liberation Sans', sans-serif;color:#141416;transform:scaleX(0.89);">EN</div>
<div class="a" style="left:609px;top:611px;width:131px;text-align:center;font:bold 20px/28px 'Liberation Sans', sans-serif;color:#141416;transform:scaleX(0.89);">AR</div>
<div class="a" style="left:789px;top:611px;width:131px;text-align:center;font:bold 20px/28px 'Liberation Sans', sans-serif;color:#141416;transform:scaleX(0.89);">PT</div>
<div class="a" style="left:969px;top:611px;width:131px;text-align:center;font:bold 20px/28px 'Liberation Sans', sans-serif;color:#141416;transform:scaleX(0.89);">JA</div>
<svg class="a" style="left:281px;top:41px;" width="942" height="804" shape-rendering="crispEdges"><path d="M14.5 0V789" stroke="#a9aaae" stroke-width="1.4"/>
<path d="M14 788.5H942" stroke="#a9aaae" stroke-width="1.4"/>
<path d="M0 780.5H14" stroke="#a9aaae" stroke-width="1.4"/>
<path d="M0 690.5H14" stroke="#a9aaae" stroke-width="1.4"/>
<path d="M0 600.5H14" stroke="#a9aaae" stroke-width="1.4"/>
<path d="M0 510.5H14" stroke="#a9aaae" stroke-width="1.4"/>
<path d="M0 420.5H14" stroke="#a9aaae" stroke-width="1.4"/>
<path d="M0 330.5H14" stroke="#a9aaae" stroke-width="1.4"/>
<path d="M0 240.5H14" stroke="#a9aaae" stroke-width="1.4"/>
<path d="M0 150.5H14" stroke="#a9aaae" stroke-width="1.4"/>
<path d="M0 60.5H14" stroke="#a9aaae" stroke-width="1.4"/>
<path d="M51.5 788V804" stroke="#a9aaae" stroke-width="1.4"/>
<path d="M141.5 788V804" stroke="#a9aaae" stroke-width="1.4"/>
<path d="M231.5 788V804" stroke="#a9aaae" stroke-width="1.4"/>
<path d="M321.5 788V804" stroke="#a9aaae" stroke-width="1.4"/>
<path d="M411.5 788V804" stroke="#a9aaae" stroke-width="1.4"/>
<path d="M501.5 788V804" stroke="#a9aaae" stroke-width="1.4"/>
<path d="M591.5 788V804" stroke="#a9aaae" stroke-width="1.4"/>
<path d="M681.5 788V804" stroke="#a9aaae" stroke-width="1.4"/>
<path d="M771.5 788V804" stroke="#a9aaae" stroke-width="1.4"/>
<path d="M861.5 788V804" stroke="#a9aaae" stroke-width="1.4"/></svg>
<div class="a" style="left:274.5px;top:800px;width:30px;height:10px;text-align:left;transform:rotate(-90deg);font:9.5px/10px 'Liberation Sans', sans-serif;letter-spacing:0.6px;color:#b8b9bc;white-space:nowrap;">-100</div>
<div class="a" style="left:274.5px;top:710px;width:30px;height:10px;text-align:left;transform:rotate(-90deg);font:9.5px/10px 'Liberation Sans', sans-serif;letter-spacing:0.6px;color:#b8b9bc;white-space:nowrap;">0</div>
<div class="a" style="left:274.5px;top:620px;width:30px;height:10px;text-align:left;transform:rotate(-90deg);font:9.5px/10px 'Liberation Sans', sans-serif;letter-spacing:0.6px;color:#b8b9bc;white-space:nowrap;">100</div>
<div class="a" style="left:274.5px;top:530px;width:30px;height:10px;text-align:left;transform:rotate(-90deg);font:9.5px/10px 'Liberation Sans', sans-serif;letter-spacing:0.6px;color:#b8b9bc;white-space:nowrap;">200</div>
<div class="a" style="left:274.5px;top:440px;width:30px;height:10px;text-align:left;transform:rotate(-90deg);font:9.5px/10px 'Liberation Sans', sans-serif;letter-spacing:0.6px;color:#b8b9bc;white-space:nowrap;">300</div>
<div class="a" style="left:274.5px;top:350px;width:30px;height:10px;text-align:left;transform:rotate(-90deg);font:9.5px/10px 'Liberation Sans', sans-serif;letter-spacing:0.6px;color:#b8b9bc;white-space:nowrap;">400</div>
<div class="a" style="left:274.5px;top:260px;width:30px;height:10px;text-align:left;transform:rotate(-90deg);font:9.5px/10px 'Liberation Sans', sans-serif;letter-spacing:0.6px;color:#b8b9bc;white-space:nowrap;">500</div>
<div class="a" style="left:274.5px;top:170px;width:30px;height:10px;text-align:left;transform:rotate(-90deg);font:9.5px/10px 'Liberation Sans', sans-serif;letter-spacing:0.6px;color:#b8b9bc;white-space:nowrap;">600</div>
<div class="a" style="left:274.5px;top:80px;width:30px;height:10px;text-align:left;transform:rotate(-90deg);font:9.5px/10px 'Liberation Sans', sans-serif;letter-spacing:0.6px;color:#b8b9bc;white-space:nowrap;">700</div>
<div class="a" style="left:335px;top:833px;font:9.5px/10px 'Liberation Sans', sans-serif;letter-spacing:0.6px;color:#b8b9bc;white-space:nowrap;will-change:transform;">0</div>
<div class="a" style="left:425px;top:833px;font:9.5px/10px 'Liberation Sans', sans-serif;letter-spacing:0.6px;color:#b8b9bc;white-space:nowrap;will-change:transform;">100</div>
<div class="a" style="left:515px;top:833px;font:9.5px/10px 'Liberation Sans', sans-serif;letter-spacing:0.6px;color:#b8b9bc;white-space:nowrap;will-change:transform;">200</div>
<div class="a" style="left:605px;top:833px;font:9.5px/10px 'Liberation Sans', sans-serif;letter-spacing:0.6px;color:#b8b9bc;white-space:nowrap;will-change:transform;">300</div>
<div class="a" style="left:695px;top:833px;font:9.5px/10px 'Liberation Sans', sans-serif;letter-spacing:0.6px;color:#b8b9bc;white-space:nowrap;will-change:transform;">400</div>
<div class="a" style="left:785px;top:833px;font:9.5px/10px 'Liberation Sans', sans-serif;letter-spacing:0.6px;color:#b8b9bc;white-space:nowrap;will-change:transform;">500</div>
<div class="a" style="left:875px;top:833px;font:9.5px/10px 'Liberation Sans', sans-serif;letter-spacing:0.6px;color:#b8b9bc;white-space:nowrap;will-change:transform;">600</div>
<div class="a" style="left:965px;top:833px;font:9.5px/10px 'Liberation Sans', sans-serif;letter-spacing:0.6px;color:#b8b9bc;white-space:nowrap;will-change:transform;">700</div>
<div class="a" style="left:1055px;top:833px;font:9.5px/10px 'Liberation Sans', sans-serif;letter-spacing:0.6px;color:#b8b9bc;white-space:nowrap;will-change:transform;">800</div>
<div class="a" style="left:1145px;top:833px;font:9.5px/10px 'Liberation Sans', sans-serif;letter-spacing:0.6px;color:#b8b9bc;white-space:nowrap;will-change:transform;">900</div>
<div class="a" style="left:895px;top:56px;width:313px;height:40px;border-radius:20px;background:#3a3d42;"></div>
<div class="a" style="left:940px;top:61px;width:30px;height:30px;border-radius:15px;background:#2b2d31;"></div>
<div class="a" style="left:1020px;top:61px;width:1px;height:30px;background:#55575c;"></div>
<div class="a" style="left:1031px;top:61px;width:52px;height:30px;border-radius:15px;background:#2b2d31;"></div>
<div class="a" style="left:1093px;top:61px;width:30px;height:30px;border-radius:15px;background:#2b2d31;"></div>
<div class="a" style="left:1093px;top:62px;width:30px;text-align:center;font:bold 14px/28px 'Liberation Sans', sans-serif;color:#eeeeee;transform:scaleX(0.8);will-change:transform;">2D</div>
<svg class="a" style="left:0;top:0;" width="1572" height="848"><g fill="#a9b5c1" transform="translate(915 76)"><rect x="-2.5" y="-2.5" width="5" height="5"/><path d="M-0.6 -2.5V-5H0.6V-2.5ZM-0.6 2.5V5H0.6V2.5ZM-2.5 -0.6H-5V0.6H-2.5ZM2.5 -0.6H5V0.6H2.5Z"/><path d="M0 -7.5L-2.2 -5H2.2ZM0 7.5L-2.2 5H2.2ZM-7.5 0L-5 -2.2V2.2ZM7.5 0L5 -2.2V2.2Z"/></g><g transform="translate(955 76)"><path d="M6.2 -2.3A6.6 6.6 0 1 1 1.2 -6.5" stroke="#eeeeee" stroke-width="1" fill="none"/><rect x="-2.6" y="-2.6" width="5.2" height="5.2" transform="translate(-0.6 0.6) rotate(45)" fill="#eeeeee"/><path d="M1.5 -2.3L5.5 -6.3" stroke="#eeeeee" stroke-width="1.3"/><path d="M2.6 -7H7.1V-2.5Z" fill="#eeeeee"/></g><g fill="none" stroke="#a9b5c1" stroke-width="1"><path d="M988.5 73.5V69.5H993"/><path d="M1001.5 76.5V82.5H996"/><path d="M996 75L1000.5 70.5"/></g><rect x="988" y="76" width="7" height="7" fill="#a9b5c1"/><path d="M997 69H1002V74Z" fill="#a9b5c1"/><path d="M1040.5 68.5V83.5 M1038.5 69.8H1053.5 M1044.3 68.5V83.5 M1038.5 73.6H1053.5 M1048.1 68.5V83.5 M1038.5 77.39999999999999H1053.5 M1051.9 68.5V83.5 M1038.5 81.19999999999999H1053.5" stroke="#f2f2f2" stroke-width="1.3" fill="none"/><path d="M1064.5 73H1073.5L1069 79.5Z" fill="#8e9094"/><g fill="none" stroke="#6c747d" stroke-width="1"><path d="M1141.5 71.5L1147.5 69 1153.5 71.5 1147.5 74Z"/><path d="M1141.5 71.5L1143.5 80.5 1147.5 82 1151.5 80.5 1153.5 71.5"/><path d="M1147.5 74V82"/></g><g transform="translate(1187.5 76)"><path d="M-6.3 0Q-3.2 -5.4 0.3 -5.4Q3.8 -5.4 6.5 0Q3.8 5.4 0.3 5.4Q-3.2 5.4 -6.3 0Z" fill="#a9b5c1"/><circle cx="0" cy="0" r="2.9" fill="#3a3d42"/><circle cx="0.3" cy="0.2" r="1.5" fill="#a9b5c1"/><path d="M1.8 3.2H8.2L5 6.6Z" fill="#a9b5c1" stroke="#3a3d42" stroke-width="0.8"/></g></svg>
</body></html>
